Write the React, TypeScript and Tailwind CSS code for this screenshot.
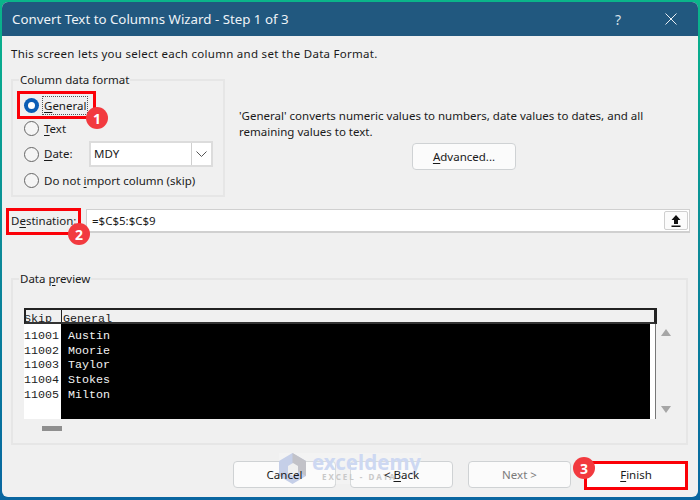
const font = "[font-family:'Noto_Sans',sans-serif]";

function Radio({ on = false }: { on?: boolean }) {
  return on ? (
    <span className="w-[15px] h-[15px] rounded-full bg-[#0a5db5] flex items-center justify-center shrink-0">
      <span className="w-[7px] h-[7px] rounded-full bg-white" />
    </span>
  ) : (
    <span className="w-[15px] h-[15px] rounded-full border border-[#666] bg-[#f5f5f5] shrink-0" />
  );
}

function RadioRow({ ul, rest, pre = "", on = false, focus = false, h }: { ul: string; rest: string; pre?: string; on?: boolean; focus?: boolean; h: string }) {
  return (
    <div className={`flex items-center gap-[4px] ${h}`}>
      <Radio on={on} />
      <span className={focus ? "outline-1 outline-dotted outline-[#555] px-px leading-[17px]" : "px-px"}>
        {pre}<span className="underline underline-offset-2">{ul}</span>{rest}
      </span>
    </div>
  );
}

function Btn({ children, disabled = false, w = "w-[103px]", white = false }: { children: React.ReactNode; disabled?: boolean; w?: string; white?: boolean }) {
  return (
    <div className={`${w} h-[27px] rounded-[4px] border ${white ? "bg-white border-white" : "bg-[#fbfbfb] border-[#cfd2d4]"} flex items-center justify-center ${disabled ? "text-[#7a7a7a]" : ""}`}>
      <span className="relative z-20">{children}</span>
    </div>
  );
}

function Badge({ n, cls }: { n: number; cls: string }) {
  return (
    <div className={`absolute w-[22px] h-[22px] rounded-full bg-[#f23a3f] text-white text-[14px] font-bold flex items-center justify-center z-30 ${cls}`}>{n}</div>
  );
}

const rows = [["11001", "Austin"], ["11002", "Moorie"], ["11003", "Taylor"], ["11004", "Stokes"], ["11005", "Milton"]];

export default function App() {
  return (
    <div className={`relative w-[700px] h-[500px] overflow-hidden bg-gradient-to-b from-[#0bb58a] via-[#0c8a98] to-[#0a66a0] pt-[2px] px-[2px] pb-[3px] ${font} text-[11.5px] text-[#1a1a1a]`}>
      <div className="h-full rounded-[6px] overflow-hidden bg-[#f0f0f0] flex flex-col">
        <div className="h-[34px] shrink-0 bg-[#21587f] flex items-center justify-between text-white pl-[10px] pr-[21px]">
          <span className="text-[13.3px] text-[#eef3f7] pt-[1px]">Convert Text to Columns Wizard - Step 1 of 3</span>
          <div className="flex items-center gap-[44px]">
            <span className="text-[14px] text-[#d5e0e8]">?</span>
            <svg width="12" height="12" viewBox="0 0 12 12" stroke="#e8eef3" strokeWidth="1" fill="none"><path d="M.5.5l11 11M11.500.5l-11 11" /></svg>
          </div>
        </div>

        <div className="flex-1 flex flex-col pl-[9px] pr-[8px]">
          <p className="mt-[9px] h-[18px] leading-[18px] tracking-[0.28px]">This screen lets you select each column and set the Data Format.</p>

          <div className="mt-[10px] flex h-[126px]">
            <fieldset className="w-[213px] h-[124px] border-2 border-[#e6e6e6] pl-[11px] pr-[10px]">
              <legend className="-ml-[5px] px-[1px] leading-[14px]">Column data format</legend>
              <RadioRow ul="G" rest="eneral" on focus h="h-[24px] mt-[6px]" />
              <RadioRow ul="T" rest="ext" h="h-[23px]" />
              <div className="flex items-center h-[26px] gap-[4px] mt-[1px]">
                <Radio />
                <span className="px-px w-[42px]"><span className="underline underline-offset-2">D</span>ate:</span>
                <div className="w-[124px] h-[26px] bg-white border-2 border-[#dcdcdc] flex items-center justify-between pl-[3px]">
                  <span>MDY</span>
                  <div className="w-[20px] h-full border-l border-[#cfcfcf] flex items-center justify-center">
                    <svg width="11" height="6" viewBox="0 0 11 6" fill="none" stroke="#555"><path d="M.5.5l5 5 5-5" /></svg>
                  </div>
                </div>
              </div>
              <RadioRow pre="Do not " ul="i" rest="mport column (skip)" h="h-[27px]" />
            </fieldset>
            <div className="ml-[14px] flex-1 flex flex-col pt-[35px]">
              <p className="leading-[16px]">'General' converts numeric values to numbers, date values to dates, and all<br />remaining values to text.</p>
              <div className="mt-[3px] ml-[173px]">
                <Btn w="w-[104px]"><span className="underline underline-offset-2">A</span>dvanced...</Btn>
              </div>
            </div>
          </div>

          <div className="mt-[10px] flex items-center h-[24px]">
            <span className="w-[75px]">D<span className="underline underline-offset-2">e</span>stination:</span>
            <div className="w-[604px] h-[24px] bg-white border border-[#d0d0d0] border-b-2 flex items-center justify-between pl-[5px] pr-[1px]">
              <span>=$C$5:$C$9</span>
              <div className="w-[24px] h-[19px] bg-[#fbfbfb] border border-[#cfcfcf] rounded-[2px] flex items-center justify-center">
                <svg width="10" height="12" viewBox="0 0 10 12" fill="#111"><path d="M5 0L9.500 5H7v4H3V5H.5zM.5 10.500h9V12h-9z" /></svg>
              </div>
            </div>
          </div>

          <fieldset className="mt-[39px] w-[677px] h-[173px] border-2 border-[#e6e6e6] relative">
            <legend className="ml-[6px] px-[1px] leading-[14px]">Data <span className="underline underline-offset-2">p</span>review</legend>
            <div className="mt-[22px] ml-[11px] flex">
              <div className="w-[633px] font-['Liberation_Mono',monospace] text-[11.67px]">
                <div className="h-[16px] flex border-2 border-[#222] border-b-[#333] bg-[#f0f0f0] border-r-[3px] leading-[19px] overflow-hidden">
                  <span className="w-[38px] border-r border-[#222] -ml-[2px]">Skip</span>
                  <span className="pl-[1px]">General</span>
                </div>
                <div className="h-[95px] flex border-l border-[#222]">
                  <div className="w-[37px] bg-white leading-[14.7px] pt-[5px] text-[#222] -ml-px">
                    {rows.map((r) => <div key={r[0]}>{r[0]}</div>)}
                  </div>
                  <div className="w-[589px] bg-black text-[#f2f2f2] leading-[14.7px] pt-[5px] pl-[7px]">
                    {rows.map((r) => <div key={r[0]}>{r[1]}</div>)}
                  </div>
                  <div className="w-[6px] bg-white border-r border-[#777]" />
                </div>
              </div>
              <div className="ml-[4px] w-[10px] h-[111px] flex flex-col items-center justify-between pt-[21px] pb-[6px]">
                <svg width="10" height="7" viewBox="0 0 10 7" fill="#a6a6a6"><path d="M5 0l5 7H0z" /></svg>
                <svg width="10" height="7" viewBox="0 0 10 7" fill="#a6a6a6"><path d="M0 0h10L5 7z" /></svg>
              </div>
            </div>
            <div className="mt-[7px] ml-[29px] w-[20px] h-[5px] bg-[#8f8f8f]" />
          </fieldset>

          <div className="mt-[16px] flex gap-[14px] pl-[222px]">
            <Btn>Cancel</Btn>
            <Btn>&lt; <span className="underline underline-offset-2">B</span>ack</Btn>
            <div className="ml-px"><Btn disabled>Next &gt;</Btn></div>
            <Btn w="w-[102px]" white><span className="underline underline-offset-2">F</span>inish</Btn>
          </div>
        </div>
      </div>

      <div className="absolute left-[17px] top-[91px] w-[79px] h-[28px] border-[3px] border-[#fb0007] z-10" />
      <div className="absolute left-[6px] top-[208px] w-[75px] h-[27px] border-[3px] border-[#fb0007] z-10" />
      <div className="absolute left-[584px] top-[461px] w-[104px] h-[29px] border-[3px] border-[#fb0007] z-10" />
      <Badge n={1} cls="left-[86px] top-[107px]" />
      <Badge n={2} cls="left-[68px] top-[223px]" />
      <Badge n={3} cls="left-[573px] top-[457px]" />

      <div className="absolute left-[279px] top-[453px] w-[142px] h-[31px] bg-white/20 flex items-center gap-[6px] z-10 pointer-events-none">
        <svg width="27" height="31" viewBox="0 0 27 31" className="shrink-0"><path d="M13.500 0L27 8v15l-13.500 8L0 23V8z" fill="#c5cfe8" /><path d="M13.500 0L27 8v15l-13.500-8z" fill="#c2c2c8" /><path d="M9 13l5-3 5 3v7l-5 3-5-3z" fill="#f0f0f0" /></svg>
        <div className="flex flex-col items-start">
          <span className="text-[#cdd8f2] text-[20.5px] font-bold leading-[20px] -mt-[4px]">exceldemy</span>
          <span className="text-[#c9c9c9] text-[8px] font-bold leading-[9px] tracking-[2px] ml-[10px]">EXCEL - DATA</span>
        </div>
      </div>
    </div>
  );
}
